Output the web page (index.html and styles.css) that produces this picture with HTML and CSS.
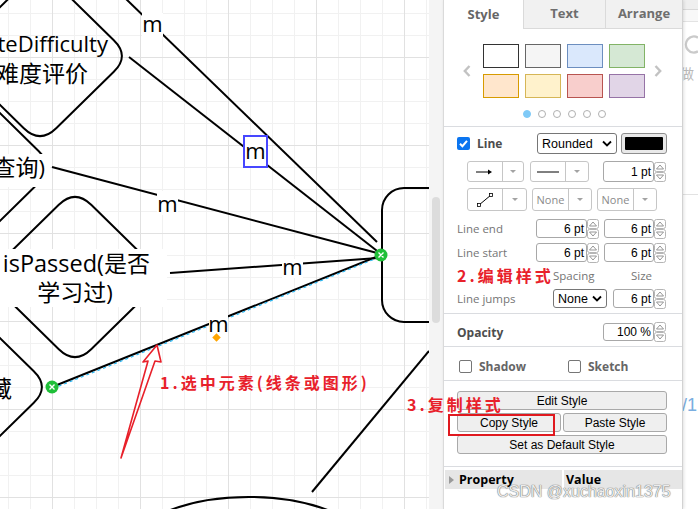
FILE: index.html
```html
<!DOCTYPE html>
<html>
<head>
<meta charset="utf-8">
<link rel="stylesheet" href="styles.css">
</head>
<body>
<div class="app">
  <div class="canvas">
    <svg class="diagram" width="429" height="509" viewBox="0 0 429 509">
      <g fill="none" stroke="#000" stroke-width="2">
        <path d="M56.2 -16.2 L113.8 40.2 Q130 56 113.8 71.8 L56.2 128.2 Q40 144 23.8 128.2 L-33.8 71.8 Q-50 56 -33.8 40.2 L23.8 -16.2 Q40 -32 56.2 -16.2 Z"/>
        <path d="M-18.8 94.8 L38.8 151.2 Q55 167 38.8 182.8 L-18.8 239.2 Q-35 255 -51.2 239.2 L-108.8 182.8 Q-125 167 -108.8 151.2 L-51.2 94.8 Q-35 79 -18.8 94.8 Z"/>
        <path d="M91.2 204.8 L148.8 261.2 Q165 277 148.8 292.8 L91.2 349.2 Q75 365 58.8 349.2 L1.2 292.8 Q-15 277 1.2 261.2 L58.8 204.8 Q75 189 91.2 204.8 Z"/>
        <path d="M-23.8 314.8 L33.8 371.2 Q50 387 33.8 402.8 L-23.8 459.2 Q-40 475 -56.2 459.2 L-113.8 402.8 Q-130 387 -113.8 371.2 L-56.2 314.8 Q-40 299 -23.8 314.8 Z"/>
        <rect x="382" y="188" width="120" height="134" rx="22"/>
        <line x1="125" y1="-2" x2="377" y2="242"/>
        <line x1="129" y1="57" x2="381" y2="254"/>
        <line x1="52" y1="167" x2="381" y2="254"/>
        <line x1="170" y1="273" x2="378" y2="258"/>
        <line x1="52" y1="387" x2="381" y2="255"/>
        <line x1="312" y1="492" x2="429" y2="351"/>
        <ellipse cx="249" cy="567" rx="135" ry="70"/>
      </g>
      <line x1="53" y1="388.5" x2="381" y2="256.5" stroke="#29b6f2" stroke-width="1.2" stroke-dasharray="3 3"/>
      <g fill="#fff">
        <rect x="-5" y="249" width="172" height="58"/>
        <rect x="-5" y="154" width="55" height="33"/>
        <rect x="142" y="13" width="21" height="24"/>
        <rect x="157" y="191" width="21" height="24"/>
        <rect x="282" y="259" width="21" height="19"/>
        <rect x="209" y="314" width="19" height="20"/>
      </g>
      <rect x="244" y="136" width="23" height="31" fill="#fff" stroke="#4747ff" stroke-width="2"/>
      <g class="lbl">
        <text x="108" y="52" text-anchor="end">rateDifficulty</text>
        <text x="88" y="82" text-anchor="end" class="cjk">难度评价</text>
        <text x="45" y="176" text-anchor="end"><tspan class="cjk">查询</tspan>)</text>
        <text x="150" y="272" text-anchor="end" class="big">isPassed(<tspan class="cjk">是否</tspan></text>
        <text x="75" y="301" text-anchor="middle"><tspan class="cjk">学习过</tspan>)</text>
        <text x="12" y="397" text-anchor="end" class="cjk">藏</text>
        <text x="152.5" y="32" text-anchor="middle">m</text>
        <text x="255.5" y="159" text-anchor="middle">m</text>
        <text x="167.5" y="212" text-anchor="middle">m</text>
        <text x="292.5" y="275" text-anchor="middle">m</text>
        <text x="218.5" y="332" text-anchor="middle">m</text>
      </g>
      <rect x="213.5" y="334.5" width="6" height="6" fill="#ffa500" transform="rotate(45 216.5 337.5)"/>
      <g>
        <circle cx="52" cy="387" r="6.5" fill="#1fbf38"/>
        <path d="M49.5 384.5 L54.5 389.5 M54.5 384.5 L49.5 389.5" stroke="#fff" stroke-width="1.4"/>
        <circle cx="381" cy="255" r="6.5" fill="#1fbf38"/>
        <path d="M378.5 252.5 L383.5 257.5 M383.5 252.5 L378.5 257.5" stroke="#fff" stroke-width="1.4"/>
      </g>
      <polygon points="121,458 148,361 143,362 157,345 161,362 155,361" fill="none" stroke="#e8202a" stroke-width="1.6" stroke-linejoin="round"/>
    </svg>
  </div>
  <div class="vscroll"><div class="thumb"></div></div>
  <div class="panel">
    <div class="tabs">
      <div class="tab active">Style</div>
      <div class="tab t-text">Text</div>
      <div class="tab t-arr">Arrange</div>
    </div>
    <div class="sec s-swatch">
      <div class="swrow">
        <svg class="chev" width="8" height="12" viewBox="0 0 8 12"><path d="M6.5 1 L1.8 6 L6.5 11" fill="none" stroke="#c2c2c2" stroke-width="2.4"/></svg>
        <div class="swgrid">
          <div class="sw sw1"></div><div class="sw sw2"></div><div class="sw sw3"></div><div class="sw sw4"></div>
          <div class="sw sw5"></div><div class="sw sw6"></div><div class="sw sw7"></div><div class="sw sw8"></div>
        </div>
        <svg class="chev chev-r" width="8" height="12" viewBox="0 0 8 12"><path d="M1.5 1 L6.2 6 L1.5 11" fill="none" stroke="#c2c2c2" stroke-width="2.4"/></svg>
      </div>
      <div class="dots"><span class="dot on"></span><span class="dot"></span><span class="dot"></span><span class="dot"></span><span class="dot"></span><span class="dot"></span></div>
    </div>
    <div class="sec s-line">
      <div class="row r1">
        <svg class="cb" width="13" height="13" viewBox="0 0 13 13"><rect width="13" height="13" rx="2" fill="#0b75f0"/><path d="M3 6.8 L5.4 9.2 L10 3.8" fill="none" stroke="#fff" stroke-width="2"/></svg>
        <span class="blabel grow">Line</span>
        <div class="select sel-r"><span>Rounded</span><svg width="10" height="7" viewBox="0 0 10 7"><path d="M1 1.5 L5 5.5 L9 1.5" stroke="#000" stroke-width="1.8" fill="none"/></svg></div>
        <div class="colorbtn"><div class="cfill"></div></div>
      </div>
      <div class="row r2">
        <div class="combo w57"><span class="cl w35"><svg width="18" height="8" viewBox="0 0 18 8"><path d="M0 4 H14" stroke="#000" stroke-width="1"/><path d="M12 1.5 L16 4 L12 6.5 Z" fill="#000"/></svg></span><span class="cr"><i class="tri"></i></span></div>
        <div class="combo w59 ml6"><span class="cl w35"><svg width="22" height="4" viewBox="0 0 22 4"><path d="M0 2 H22" stroke="#000" stroke-width="1"/></svg></span><span class="cr"><i class="tri"></i></span></div>
        <div class="spin w51 ml14"><span>1 pt</span></div>
        <svg class="stepper" width="12" height="20" viewBox="0 0 12 20"><rect x="0.5" y="0.5" width="11" height="9" rx="2" fill="#fff" stroke="#b5b5b5"/><rect x="0.5" y="10.5" width="11" height="9" rx="2" fill="#fff" stroke="#b5b5b5"/><path d="M2.5 7 L6 3 L9.5 7 Z M2.5 13 L6 17 L9.5 13 Z" fill="none" stroke="#8a8a8a" stroke-width="0.9"/></svg>
      </div>
      <div class="row r3">
        <div class="combo w60"><span class="cl w35"><svg width="18" height="16" viewBox="0 0 18 16"><path d="M3 13 L15 3" stroke="#000" stroke-width="1"/><rect x="1.5" y="11.5" width="3" height="3" fill="#fff" stroke="#000" stroke-width="0.8"/><rect x="13.5" y="1.5" width="3" height="3" fill="#fff" stroke="#000" stroke-width="0.8"/></svg></span><span class="cr"><i class="tri"></i></span></div>
        <div class="combo w60 ml5"><span class="cl w36 none">None</span><span class="cr"><i class="tri"></i></span></div>
        <div class="combo w60 ml5"><span class="cl w36 none">None</span><span class="cr"><i class="tri"></i></span></div>
      </div>
      <div class="row r4">
        <span class="label lw79">Line end</span>
        <div class="spin w51"><span>6 pt</span></div>
        <svg class="stepper" width="12" height="20" viewBox="0 0 12 20"><rect x="0.5" y="0.5" width="11" height="9" rx="2" fill="#fff" stroke="#b5b5b5"/><rect x="0.5" y="10.5" width="11" height="9" rx="2" fill="#fff" stroke="#b5b5b5"/><path d="M2.5 7 L6 3 L9.5 7 Z M2.5 13 L6 17 L9.5 13 Z" fill="none" stroke="#8a8a8a" stroke-width="0.9"/></svg>
        <div class="spin w50 ml5"><span>6 pt</span></div>
        <svg class="stepper" width="12" height="20" viewBox="0 0 12 20"><rect x="0.5" y="0.5" width="11" height="9" rx="2" fill="#fff" stroke="#b5b5b5"/><rect x="0.5" y="10.5" width="11" height="9" rx="2" fill="#fff" stroke="#b5b5b5"/><path d="M2.5 7 L6 3 L9.5 7 Z M2.5 13 L6 17 L9.5 13 Z" fill="none" stroke="#8a8a8a" stroke-width="0.9"/></svg>
      </div>
      <div class="row r5">
        <span class="label lw79">Line start</span>
        <div class="spin w51"><span>6 pt</span></div>
        <svg class="stepper" width="12" height="20" viewBox="0 0 12 20"><rect x="0.5" y="0.5" width="11" height="9" rx="2" fill="#fff" stroke="#b5b5b5"/><rect x="0.5" y="10.5" width="11" height="9" rx="2" fill="#fff" stroke="#b5b5b5"/><path d="M2.5 7 L6 3 L9.5 7 Z M2.5 13 L6 17 L9.5 13 Z" fill="none" stroke="#8a8a8a" stroke-width="0.9"/></svg>
        <div class="spin w50 ml5"><span>6 pt</span></div>
        <svg class="stepper" width="12" height="20" viewBox="0 0 12 20"><rect x="0.5" y="0.5" width="11" height="9" rx="2" fill="#fff" stroke="#b5b5b5"/><rect x="0.5" y="10.5" width="11" height="9" rx="2" fill="#fff" stroke="#b5b5b5"/><path d="M2.5 7 L6 3 L9.5 7 Z M2.5 13 L6 17 L9.5 13 Z" fill="none" stroke="#8a8a8a" stroke-width="0.9"/></svg>
      </div>
      <div class="row r6">
        <span class="label sp">Spacing</span>
        <span class="label">Size</span>
      </div>
      <div class="row r7">
        <span class="label lw96">Line jumps</span>
        <div class="select sel-n"><span>None</span><svg width="10" height="7" viewBox="0 0 10 7"><path d="M1 1.5 L5 5.5 L9 1.5" stroke="#000" stroke-width="1.8" fill="none"/></svg></div>
        <div class="spin w41 ml6"><span>6 pt</span></div>
        <svg class="stepper" width="12" height="20" viewBox="0 0 12 20"><rect x="0.5" y="0.5" width="11" height="9" rx="2" fill="#fff" stroke="#b5b5b5"/><rect x="0.5" y="10.5" width="11" height="9" rx="2" fill="#fff" stroke="#b5b5b5"/><path d="M2.5 7 L6 3 L9.5 7 Z M2.5 13 L6 17 L9.5 13 Z" fill="none" stroke="#8a8a8a" stroke-width="0.9"/></svg>
      </div>
    </div>
    <div class="sec s-op">
      <div class="row r8">
        <span class="blabel grow">Opacity</span>
        <div class="spin w51"><span>100 %</span></div>
        <svg class="stepper" width="12" height="20" viewBox="0 0 12 20"><rect x="0.5" y="0.5" width="11" height="9" rx="2" fill="#fff" stroke="#b5b5b5"/><rect x="0.5" y="10.5" width="11" height="9" rx="2" fill="#fff" stroke="#b5b5b5"/><path d="M2.5 7 L6 3 L9.5 7 Z M2.5 13 L6 17 L9.5 13 Z" fill="none" stroke="#8a8a8a" stroke-width="0.9"/></svg>
      </div>
    </div>
    <div class="sec s-sh">
      <div class="row r9">
        <div class="chk chk1"><span class="cbx"></span><span class="blabel">Shadow</span></div>
        <div class="chk"><span class="cbx"></span><span class="blabel">Sketch</span></div>
      </div>
    </div>
    <div class="sec s-btn">
      <div class="btn">Edit Style</div>
      <div class="btnrow"><div class="btn half">Copy Style</div><div class="btn half">Paste Style</div></div>
      <div class="btn">Set as Default Style</div>
    </div>
    <div class="proprow">
      <div class="pcell pc1"><span class="ptri"></span>Property</div>
      <div class="pcell pc2">Value</div>
    </div>
  </div>
  <div class="side">
    <div class="tb1"></div>
    <div class="tb2"></div>
    <svg class="redo" width="15" height="23" viewBox="0 0 15 23"><path d="M15 4.6 A8 8 0 1 0 15 18.4" fill="none" stroke="#cacaca" stroke-width="2.4"/></svg>
    <div class="redo-t">做</div>
    <div class="sline"></div>
    <div class="pg">/1</div>
  </div>
</div>
<div class="note n1">1.选中元素(线条或图形)</div>
<div class="note n2">2.编辑样式</div>
<div class="note n3">3.复制样式</div>
<div class="redbox"></div>
<div class="watermark">CSDN @xuchaoxin1375</div>
</body>
</html>
```
FILE: styles.css
```css
html, body { margin: 0; padding: 0; }
body {
  width: 698px;
  height: 509px;
  overflow: hidden;
  position: relative;
  background: #fff;
  font-family: "Open Sans", "Liberation Sans", sans-serif;
}
.app { display: flex; height: 509px; }

/* canvas */
.canvas {
  width: 429px;
  height: 509px;
  flex: none;
  overflow: hidden;
  background-color: #fff;
  background-image:
    linear-gradient(to right, #e1e1e1 1px, transparent 1px),
    linear-gradient(to bottom, #e1e1e1 1px, transparent 1px),
    linear-gradient(to right, #f1f1f1 1px, transparent 1px),
    linear-gradient(to bottom, #f1f1f1 1px, transparent 1px);
  background-size: 88px 88px, 88px 88px, 22px 22px, 22px 22px;
  background-position: 52px 0, 0 57px, 8px 0, 0 13px;
}
.diagram { display: block; overflow: hidden; }
.lbl text {
  font-family: "Open Sans", "Noto Sans CJK SC", sans-serif;
  font-size: 22px;
  fill: #000;
}
.lbl text.big { font-size: 23.5px; }
.lbl .cjk {
  font-family: "Noto Sans CJK SC", sans-serif;
  font-size: 23px;
}

.vscroll {
  width: 14px;
  flex: none;
  background: #f4f4f4;
  padding-top: 197px;
  box-sizing: border-box;
}
.thumb { width: 8px; height: 126px; margin-left: 3px; background: #dcdcdc; border-radius: 4px; }

/* panel */
.panel {
  width: 240px;
  flex: none;
  box-sizing: border-box;
  border-left: 1px solid #dadada;
  border-right: 1px solid #d2d2d2;
  background: #fff;
  box-shadow: 1px 0 3px rgba(0,0,0,0.12);
  position: relative;
  z-index: 1;
}
.tabs { display: flex; height: 29px; }
.tab {
  box-sizing: border-box;
  height: 29px;
  display: flex;
  align-items: center;
  justify-content: center;
  font-weight: 700;
  font-size: 13px;
  color: #6e6e6e;
  background: #f1f1f1;
  border-bottom: 1px solid #dadada;
  border-left: 1px solid #dadada;
  padding-bottom: 3px;
}
.tab.active { width: 79px; background: #fff; border-left: none; border-bottom-color: #fff; padding-bottom: 0; color: #666; }
.t-text { width: 82px; }
.t-arr { width: 77px; }

.sec { border-bottom: 1px solid #dadce0; }
.s-swatch { padding: 15px 0 8px; }
.swrow { display: flex; align-items: center; padding-left: 19px; height: 54px; }
.chev { flex: none; margin-right: 12px; }
.chev-r { margin: 0 0 0 9px; }
.swgrid { display: grid; grid-template-columns: repeat(4, 36px); grid-auto-rows: 24px; gap: 6px; }
.sw { box-sizing: border-box; border: 1px solid #000; }
.sw1 { background: #fff; border-color: #333; }
.sw2 { background: #f5f5f5; border-color: #666; }
.sw3 { background: #dae8fc; border-color: #6c8ebf; }
.sw4 { background: #d5e8d4; border-color: #82b366; }
.sw5 { background: #ffe6cc; border-color: #d79b00; }
.sw6 { background: #fff2cc; border-color: #d6b656; }
.sw7 { background: #f8cecc; border-color: #b85450; }
.sw8 { background: #e1d5e7; border-color: #9673a6; }
.dots { display: flex; gap: 7px; padding-left: 79px; margin-top: 12px; height: 8px; }
.dot { box-sizing: border-box; width: 8px; height: 8px; border-radius: 50%; border: 1px solid #b0b0b0; background: #fff; }
.dot.on { background: #7fcaf7; border-color: #7fcaf7; }

.s-line { padding-bottom: 5px; }
.row { display: flex; align-items: center; }
.r1 { margin-top: 6px; height: 21px; padding-left: 13px; padding-right: 15px; }
.r2 { margin-top: 7px; height: 21px; padding-left: 23px; }
.r3 { margin-top: 6px; height: 23px; padding-left: 23px; }
.r4 { margin-top: 8px; height: 19px; padding-left: 13px; }
.r5 { margin-top: 5px; height: 19px; padding-left: 13px; }
.r6 { margin-top: 6px; height: 14px; }
.r7 { margin-top: 7px; height: 19px; padding-left: 13px; }
.grow { flex: 1; }
.blabel { font-weight: 700; font-size: 12px; color: #4d4d4d; }
.r1 .blabel { margin-left: 7px; }
.label { font-size: 11.5px; color: #757575; white-space: nowrap; }
.lw79 { width: 79px; flex: none; }
.lw96 { width: 96px; flex: none; }
.sp { margin-left: 109px; width: 78px; flex: none; }

.select {
  box-sizing: border-box;
  height: 21px;
  border: 1px solid #767676;
  border-radius: 3px;
  background: #fff;
  display: flex;
  align-items: center;
  justify-content: space-between;
  padding: 0 4px 0 4px;
  font-family: "Liberation Sans", sans-serif;
  font-size: 12.5px;
  color: #000;
}
.sel-r { width: 80px; margin-right: 4px; }
.sel-n { width: 54px; height: 19px; overflow: hidden; }
.colorbtn {
  box-sizing: border-box;
  width: 46px;
  height: 21px;
  border: 1px solid #8e8e8e;
  border-radius: 3px;
  background: #e9e9e9;
  padding: 3px;
}
.cfill { height: 100%; background: #000; border-radius: 1px; }

.combo {
  box-sizing: border-box;
  height: 100%;
  display: flex;
  border: 1px solid #c6c6c6;
  border-radius: 3px;
  background: #fff;
}
.w57 { width: 57px; }
.w59 { width: 59px; }
.w60 { width: 60px; }
.cl { display: flex; align-items: center; justify-content: center; border-right: 1px solid #c6c6c6; flex: none; box-sizing: border-box; }
.w35 { width: 35px; }
.w36 { width: 36px; }
.cr { flex: 1; display: flex; align-items: center; justify-content: center; }
.tri { width: 0; height: 0; border-left: 3px solid transparent; border-right: 3px solid transparent; border-top: 3px solid #a3a3a3; }
.none { font-size: 11px; color: #8a8a8a; }
.ml5 { margin-left: 5px; }
.ml6 { margin-left: 6px; }
.ml14 { margin-left: 14px; }

.spin {
  box-sizing: border-box;
  height: 100%;
  border: 1px solid #a8a8a8;
  border-radius: 3px;
  background: #fff;
  display: flex;
  align-items: center;
  justify-content: flex-end;
  padding-right: 2px;
  font-family: "Liberation Sans", sans-serif;
  font-size: 12px;
  color: #000;
  flex: none;
}
.w51 { width: 51px; }
.w50 { width: 50px; }
.w41 { width: 41px; }
.stepper { flex: none; display: block; }

.s-op { padding-bottom: 5px; }
.r8 { margin-top: 9px; height: 18px; padding-left: 13px; padding-right: 16px; }
.s-sh { padding-bottom: 8px; }
.r9 { margin-top: 13px; height: 12px; padding-left: 15px; }
.chk { display: flex; align-items: center; gap: 7px; }
.chk1 { width: 109px; }
.cbx { box-sizing: border-box; width: 13px; height: 13px; border: 1px solid #767676; border-radius: 2px; background: #fff; }
.chk .blabel { color: #666; }

.s-btn { padding: 10px 15px 12px 13px; display: flex; flex-direction: column; gap: 3px; }
.btn {
  box-sizing: border-box;
  height: 19px;
  border: 1px solid #a9a9a9;
  border-radius: 3px;
  background: #efefef;
  display: flex;
  align-items: center;
  justify-content: center;
  font-family: "Liberation Sans", sans-serif;
  font-size: 12px;
  color: #000;
}
.btnrow { display: flex; gap: 2px; }
.half { flex: 1; }

.proprow { display: flex; gap: 2px; margin-top: 3px; padding-left: 1px; }
.pcell {
  height: 19px;
  background: #e6e6e6;
  display: flex;
  align-items: center;
  font-weight: 700;
  font-size: 12.5px;
  color: #000;
}
.pc1 { width: 117px; padding-left: 4px; box-sizing: border-box; }
.pc2 { flex: 1; padding-left: 2px; }
.ptri { width: 0; height: 0; border-top: 4px solid transparent; border-bottom: 4px solid transparent; border-left: 5px solid #9a9a9a; margin-right: 5px; }

/* right strip */
.side { flex: 1; background: #fff; overflow: hidden; }
.tb1 { height: 9px; background: #efefef; border-bottom: 1px solid #d9d9d9; }
.tb2 { height: 11px; background: #f8f8f8; border-bottom: 1px solid #e3e3e3; }
.redo { display: block; margin-top: 11px; }
.redo-t { margin-top: 9px; margin-left: -3px; font-family: "Noto Sans CJK SC", sans-serif; font-size: 14px; line-height: 16px; color: #b9b9b9; }
.sline { margin-top: 113px; height: 1px; background: #e2e2e2; }
.pg { margin-top: 201px; font-family: "Liberation Sans", sans-serif; font-size: 18px; line-height: 18px; color: #7aaee0; margin-left: -1px; }

/* overlays */
.note {
  position: absolute;
  font-family: "Noto Sans CJK SC", sans-serif;
  font-weight: 700;
  font-size: 16px;
  line-height: 20px;
  letter-spacing: 3px;
  color: #e8212b;
  white-space: nowrap;
  z-index: 5;
}
.n1 { left: 160px; top: 372px; }
.n2 { left: 457px; top: 265px; }
.n3 { left: 407px; top: 394px; }
.redbox {
  position: absolute;
  left: 448px;
  top: 414px;
  width: 107px;
  height: 22px;
  box-sizing: border-box;
  border: 2px solid #e0191f;
  z-index: 5;
}
.watermark {
  position: absolute;
  left: 497px;
  top: 483px;
  font-family: "Liberation Sans", sans-serif;
  font-size: 16px;
  line-height: 18px;
  color: #ececec;
  text-shadow: 0 0 1px #6b6b6b, 0 0 1px #6b6b6b;
  white-space: nowrap;
  z-index: 5;
}
```
